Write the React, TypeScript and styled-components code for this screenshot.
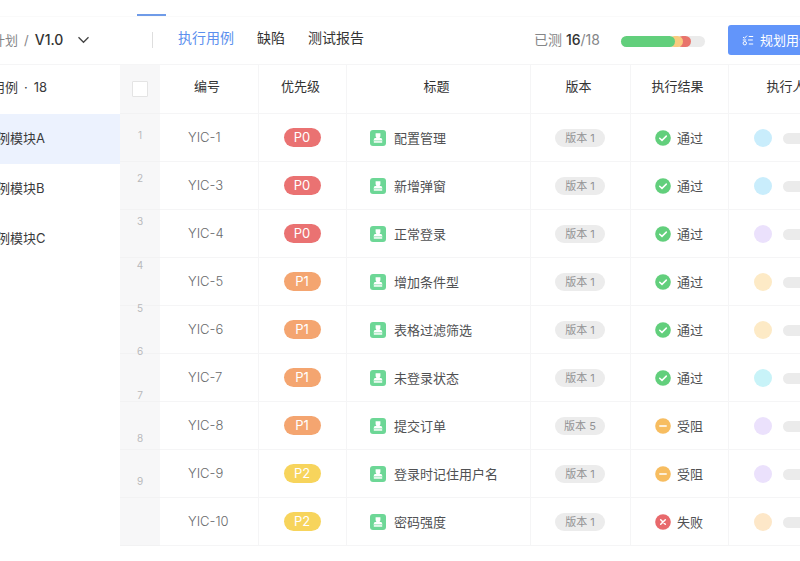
import React from "react";
import styled, { createGlobalStyle } from "styled-components";

const GlobalStyle = createGlobalStyle`
  * { box-sizing: border-box; }
  body {
    margin: 0;
    background: #fff;
    color: #3a3a3c;
    font: 400 13px/20px Inter, "Noto Sans CJK SC", sans-serif;
  }
  button, input { font: inherit; margin: 0; }
  a { color: inherit; text-decoration: none; }
`;

const line = "#f5f5f6";

const Viewport = styled.div`
  min-height: 100vh;
  overflow: hidden;
`;

const Page = styled.div`
  margin: 0 -48px 0 -40px;
`;

const TopNav = styled.nav`
  display: flex;
  align-items: flex-end;
  height: 16px;
  padding-left: 177px;
  box-shadow: 0 1px #fafafa;
`;

const ActiveMark = styled.span`
  width: 29px;
  height: 2px;
  background: #6f9be8;
`;

const Toolbar = styled.header`
  display: flex;
  align-items: center;
  height: 49px;
  padding-right: 24px;
  border-bottom: 1px solid ${line};
`;

const Crumbs = styled.div`
  display: flex;
  align-items: center;
  flex: 0 0 193px;
  gap: 6px;
  height: 16px;
  padding-left: 6px;
  border-right: 1px solid #dedede;
  color: #858688;
`;

const VersionButton = styled.button`
  display: flex;
  align-items: center;
  gap: 14px;
  padding: 0;
  border: 0;
  background: none;
  color: #333;
  font-size: 14px;
  font-weight: 500;
`;

const Tabs = styled.nav`
  display: flex;
  flex: 1;
  gap: 23px;
  padding: 0 0 4px 25px;
  font-size: 14px;
`;

const Tab = styled.a<{ $active?: boolean }>`
  color: ${(p) => (p.$active ? "#5b8fee" : "#333")};
`;

const Tested = styled.div`
  color: #858688;
  font-size: 14px;
  white-space: pre;
  b { color: #333; font-weight: 500; }
`;

const Progress = styled.div`
  display: flex;
  width: 84px;
  height: 11px;
  margin: 2px 23px 0 21px;
  border-radius: 6px;
  background: #ebebeb;
`;

const Segment = styled.span<{ $color: string; $width: number; $level: number }>`
  position: relative;
  z-index: ${(p) => p.$level};
  width: ${(p) => p.$width}px;
  margin-right: -6px;
  border-radius: 6px;
  background: ${(p) => p.$color};
`;

const PlanButton = styled.button`
  display: flex;
  align-items: center;
  gap: 6px;
  height: 30px;
  padding: 0 12px 0 14px;
  border: 0;
  border-radius: 3px;
  background: #6295fa;
  color: #fff;
  white-space: nowrap;
`;

const Content = styled.main`
  display: flex;
  align-items: stretch;
`;

const Sidebar = styled.aside`
  flex: 0 0 160px;
`;

const SidebarTitle = styled.h2`
  display: flex;
  gap: 6px;
  height: 49px;
  margin: 0;
  padding: 12px 0 0 6px;
  font-size: 13px;
  font-weight: 400;
`;

const ModuleLink = styled.a<{ $active?: boolean }>`
  display: flex;
  align-items: center;
  height: 50px;
  padding: 0 0 2px 24px;
  background: ${(p) => (p.$active ? "#ecf2fe" : "transparent")};
`;

const Gutter = styled.div`
  display: flex;
  flex-direction: column;
  flex: 0 0 40px;
  background: #f7f7f8;
`;

const GutterHead = styled.div`
  display: flex;
  align-items: center;
  justify-content: center;
  height: 49px;
  border-bottom: 1px solid #f2f2f3;
`;

const CheckBox = styled.input`
  appearance: none;
  width: 16px;
  height: 16px;
  border: 1px solid #e4e4e4;
  border-radius: 1px;
  background: #fff;
`;

const Numbers = styled.ol`
  display: flex;
  flex: 1;
  flex-direction: column;
  margin: 0;
  padding: 0 0 42px;
  list-style: none;
  color: #b9b9bb;
  font-size: 10px;
  background: repeating-linear-gradient(#f7f7f8 0 47px, #f2f2f3 47px 48px);
  li {
    display: flex;
    flex: 1;
    align-items: center;
    justify-content: center;
    padding-bottom: 2px;
  }
`;

const Table = styled.table`
  flex: 1;
  width: 0;
  table-layout: fixed;
  border-collapse: separate;
  border-spacing: 0;
`;

const Col = styled.col<{ $width?: number }>`
  width: ${(p) => (p.$width ? `${p.$width}px` : "auto")};
`;

const HeadCell = styled.th`
  height: 49px;
  padding: 0 4px 6px 0;
  border-right: 1px solid ${line};
  border-bottom: 1px solid ${line};
  color: #333;
  font-weight: 400;
`;

const Cell = styled.td<{ $indent?: number }>`
  height: 48px;
  padding: 0 1px 1px ${(p) => p.$indent ?? 0}px;
  border-right: 1px solid ${line};
  border-bottom: 1px solid ${line};
  text-align: ${(p) => (p.$indent ? "left" : "center")};
`;

const CaseId = styled.span`
  color: #6a6b6d;
  font-weight: 300;
`;

const priorityColors: Record<string, string> = { P0: "#ea7272", P1: "#f4a570", P2: "#f7d45c" };

const Priority = styled.span<{ $level: string }>`
  display: inline-block;
  width: 37px;
  border-radius: 10px;
  background: ${(p) => priorityColors[p.$level]};
  color: #fff;
  font-size: 13px;
  line-height: 19px;
`;

const Inline = styled.span<{ $gap: number }>`
  display: inline-flex;
  align-items: center;
  gap: ${(p) => p.$gap}px;
  vertical-align: middle;
  color: #505153;
`;

const VersionTag = styled.span`
  display: inline-block;
  width: 50px;
  border-radius: 9px;
  background: #ececec;
  color: #929294;
  font-size: 11px;
  line-height: 18px;
`;

const Avatar = styled.span<{ $color: string }>`
  width: 18px;
  height: 18px;
  border-radius: 50%;
  background: ${(p) => p.$color};
`;

const NameBar = styled.span`
  width: 40px;
  height: 11px;
  border-radius: 6px;
  background: #ebebeb;
`;

const CaseIcon = () => (
  <svg width="16" height="16" viewBox="0 0 16 16" aria-hidden="true">
    <rect width="16" height="16" rx="3" fill="#6dd796" />
    <path d="M5.6 3.2h4.8v3.1L9.6 8h1.8l1.2 2.4H3.4L4.6 8h1.8l-.8-1.7z" fill="#fff" />
    <path d="M3.8 11.2h8.4v1.5H3.8z" fill="#fff" />
  </svg>
);

const resultMarks: Record<string, { color: string; d: string }> = {
  通过: { color: "#62cf7c", d: "M4.7 8.2l2.3 2.2 4.3-4.3" },
  受阻: { color: "#f7bd60", d: "M4.8 8h6.4" },
  失败: { color: "#e8696c", d: "M5.7 5.7l4.6 4.6M10.3 5.7l-4.6 4.6" },
};

const ResultIcon = ({ result }: { result: string }) => (
  <svg width="16" height="16" viewBox="0 0 16 16" aria-hidden="true">
    <circle cx="8" cy="8" r="7.8" fill={resultMarks[result].color} />
    <path d={resultMarks[result].d} fill="none" stroke="#fff" strokeWidth="1.5" strokeLinecap="round" />
  </svg>
);

const Chevron = () => (
  <svg width="13" height="8" viewBox="0 0 13 8" aria-hidden="true">
    <path d="M1.5 1.3l5 5 5-5" fill="none" stroke="#444" strokeWidth="1.3" />
  </svg>
);

const PlanIcon = () => (
  <svg width="12" height="12" viewBox="0 0 12 12" fill="none" stroke="#fff" aria-hidden="true">
    <path d="M1 3l1.4 1.3L5 1.6M6.8 2.5h4.4M6 6h4.8M6.8 10h4.4M.8 6h3.4" />
    <circle cx="2.8" cy="9.2" r="1.7" />
  </svg>
);

const cases = [
  { id: "YIC-1", priority: "P0", title: "配置管理", version: 1, result: "通过", avatar: "#c9edfc" },
  { id: "YIC-3", priority: "P0", title: "新增弹窗", version: 1, result: "通过", avatar: "#c9edfc" },
  { id: "YIC-4", priority: "P0", title: "正常登录", version: 1, result: "通过", avatar: "#ebe1fc" },
  { id: "YIC-5", priority: "P1", title: "增加条件型", version: 1, result: "通过", avatar: "#fdeac6" },
  { id: "YIC-6", priority: "P1", title: "表格过滤筛选", version: 1, result: "通过", avatar: "#fdeac6" },
  { id: "YIC-7", priority: "P1", title: "未登录状态", version: 1, result: "通过", avatar: "#c8f3f8" },
  { id: "YIC-8", priority: "P1", title: "提交订单", version: 5, result: "受阻", avatar: "#ebe1fc" },
  { id: "YIC-9", priority: "P2", title: "登录时记住用户名", version: 1, result: "受阻", avatar: "#ebe1fc" },
  { id: "YIC-10", priority: "P2", title: "密码强度", version: 1, result: "失败", avatar: "#fde7c8" },
];

const headings = ["编号", "优先级", "标题", "版本", "执行结果", "执行人"];

export default function App() {
  return (
    <Viewport>
      <GlobalStyle />
      <Page>
        <TopNav>
          <ActiveMark />
        </TopNav>
        <Toolbar>
          <Crumbs>
            <span>测试计划</span>
            <span>/</span>
            <VersionButton>
              V1.0
              <Chevron />
            </VersionButton>
          </Crumbs>
          <Tabs>
            <Tab href="#cases" $active>执行用例</Tab>
            <Tab href="#defects">缺陷</Tab>
            <Tab href="#report">测试报告</Tab>
          </Tabs>
          <Tested>已测 <b>16</b>/18</Tested>
          <Progress>
            <Segment $color="#62cf7c" $width={54} $level={3} />
            <Segment $color="#f9cb7f" $width={14} $level={2} />
            <Segment $color="#e8746c" $width={14} $level={1} />
          </Progress>
          <PlanButton>
            <PlanIcon />
            规划用例
          </PlanButton>
        </Toolbar>
        <Content>
          <Sidebar>
            <SidebarTitle>
              <span>全部用例</span>
              <span>·</span>
              <span>18</span>
            </SidebarTitle>
            <ModuleLink href="#a" $active>用例模块A</ModuleLink>
            <ModuleLink href="#b">用例模块B</ModuleLink>
            <ModuleLink href="#c">用例模块C</ModuleLink>
          </Sidebar>
          <Gutter>
            <GutterHead>
              <CheckBox type="checkbox" aria-label="全选" />
            </GutterHead>
            <Numbers>
              {cases.map((c, i) => (
                <li key={c.id}>{i + 1}</li>
              ))}
            </Numbers>
          </Gutter>
          <Table>
            <colgroup>
              <Col $width={99} />
              <Col $width={88} />
              <Col />
              <Col $width={100} />
              <Col $width={98} />
              <Col $width={119} />
            </colgroup>
            <thead>
              <tr>
                {headings.map((h) => (
                  <HeadCell key={h} scope="col">{h}</HeadCell>
                ))}
              </tr>
            </thead>
            <tbody>
              {cases.map((c) => (
                <tr key={c.id}>
                  <Cell $indent={28}><CaseId>{c.id}</CaseId></Cell>
                  <Cell><Priority $level={c.priority}>{c.priority}</Priority></Cell>
                  <Cell $indent={23}>
                    <Inline $gap={8}><CaseIcon />{c.title}</Inline>
                  </Cell>
                  <Cell><VersionTag>版本 {c.version}</VersionTag></Cell>
                  <Cell>
                    <Inline $gap={6}><ResultIcon result={c.result} />{c.result}</Inline>
                  </Cell>
                  <Cell $indent={25}>
                    <Inline $gap={11}><Avatar $color={c.avatar} /><NameBar /></Inline>
                  </Cell>
                </tr>
              ))}
            </tbody>
          </Table>
        </Content>
      </Page>
    </Viewport>
  );
}
